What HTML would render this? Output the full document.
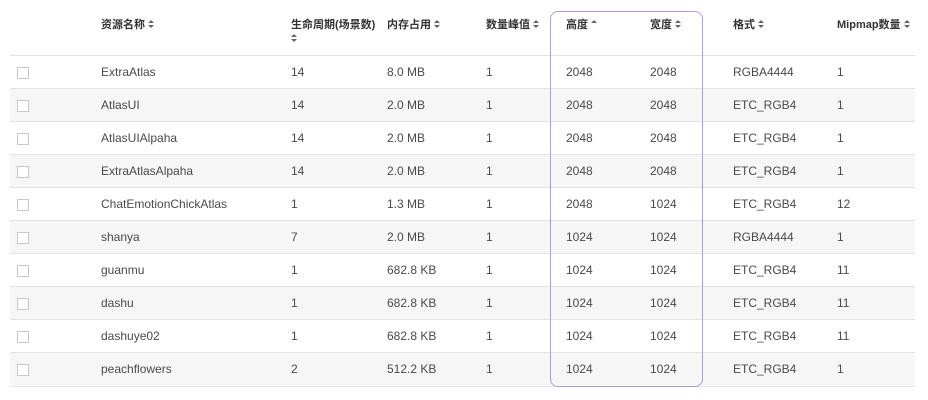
<!DOCTYPE html>
<html><head><meta charset="utf-8"><style>
body{margin:0;width:928px;height:400px;background:#fff;font-family:"Liberation Sans","Noto Sans CJK SC",sans-serif;position:relative;overflow:hidden;color:#444}
.h{position:absolute;top:18px;font-size:11px;font-weight:bold;color:#333;line-height:14px}
.s{display:inline-block;width:6px;height:9px;position:relative;vertical-align:-1px;margin-left:3px}
.s:before{content:"";position:absolute;left:0;top:0;border-left:3px solid transparent;border-right:3px solid transparent;border-bottom:3.5px solid #666}
.s:after{content:"";position:absolute;left:0;top:5px;border-left:3px solid transparent;border-right:3px solid transparent;border-top:3.5px solid #666}
.s.up:after{display:none}
.row{position:absolute;left:10px;width:905px;height:33px;border-top:1px solid #e3e3e6;box-sizing:border-box}
.row.g{background:#f6f6f7}
.c{position:absolute;top:9px;font-size:12px;line-height:14px;color:#4a4a4a}
.cb{position:absolute;left:7px;top:11px;width:10px;height:10px;border:1px solid #c8c8c8;background:#fff}
.box{position:absolute;left:550px;top:11px;width:151px;height:374px;border:1.5px solid #b09ad8;border-radius:8px}
</style></head><body>
<div class="h" style="left:101px">资源名称<span class="s"></span></div>
<div class="h" style="left:291px">生命周期(场景数)<br><span class="s" style="margin-left:0"></span></div>
<div class="h" style="left:387px">内存占用<span class="s"></span></div>
<div class="h" style="left:486px">数量峰值<span class="s"></span></div>
<div class="h" style="left:566px">高度<span class="s up"></span></div>
<div class="h" style="left:650px">宽度<span class="s"></span></div>
<div class="h" style="left:733px">格式<span class="s"></span></div>
<div class="h" style="left:837px">Mipmap数量<span class="s"></span></div>
<div id="t"></div>
<div class="row" style="top:386px;height:1px"></div>
<div class="box"></div>
<script>
var d=[["ExtraAtlas","14","8.0 MB","2048","2048","RGBA4444","1"],["AtlasUI","14","2.0 MB","2048","2048","ETC_RGB4","1"],["AtlasUIAlpaha","14","2.0 MB","2048","2048","ETC_RGB4","1"],["ExtraAtlasAlpaha","14","2.0 MB","2048","2048","ETC_RGB4","1"],["ChatEmotionChickAtlas","1","1.3 MB","2048","1024","ETC_RGB4","12"],["shanya","7","2.0 MB","1024","1024","RGBA4444","1"],["guanmu","1","682.8 KB","1024","1024","ETC_RGB4","11"],["dashu","1","682.8 KB","1024","1024","ETC_RGB4","11"],["dashuye02","1","682.8 KB","1024","1024","ETC_RGB4","11"],["peachflowers","2","512.2 KB","1024","1024","ETC_RGB4","1"]];
var h="";d.forEach(function(r,i){var x=[91,281,377,476,556,640,723,827];
h+='<div class="row'+(i%2?' g':'')+'" style="top:'+(55+i*33)+'px"><div class="cb"></div>';
var v=[r[0],r[1],r[2],"1",r[3],r[4],r[5],r[6]];v.forEach(function(t,j){h+='<div class="c" style="left:'+x[j]+'px">'+t+'</div>'});h+='</div>'});
document.getElementById("t").innerHTML=h;
</script>
</body></html>
